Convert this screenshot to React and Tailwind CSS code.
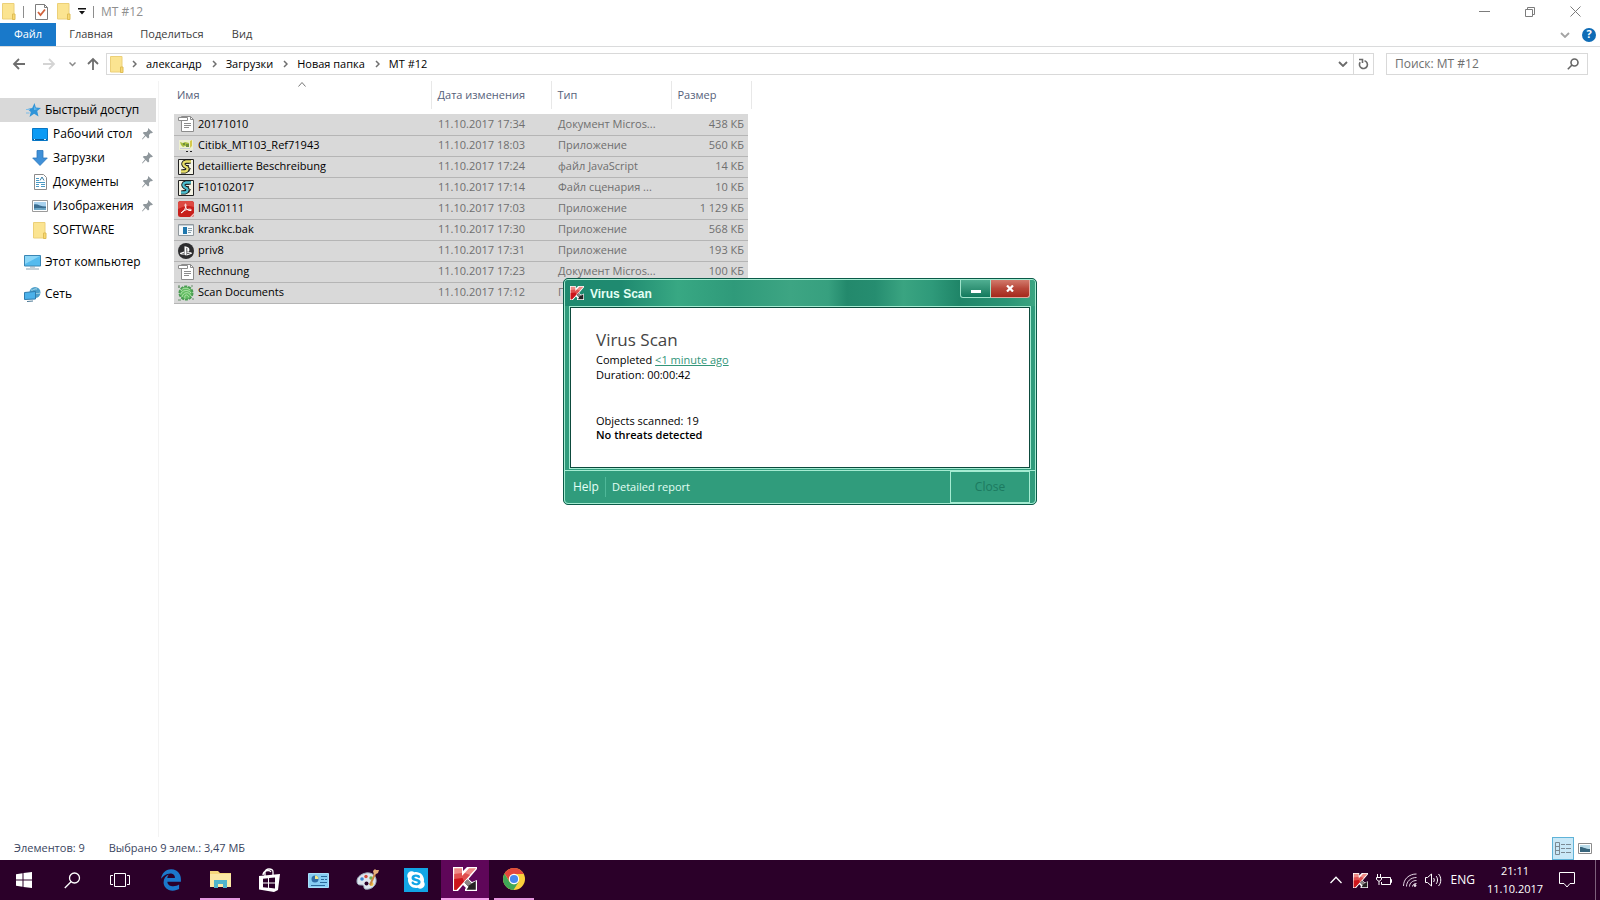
import React from 'react';
import { FaEdgeLegacy, FaPlaystation, FaSkype } from 'react-icons/fa';

/* ---------- Icons ---------- */

const FolderIcon = () => (
  <svg width="14" height="17" viewBox="0 0 14 17">
    <path d="M.5.5h11.500v15.500H.5z" fill="#fbe491" stroke="#ecd078" />
    <path d="M10.500 11h2.500v5.500h-2.500z" fill="#f8d873" stroke="#dfbd55" />
  </svg>
);

const CheckDocIcon = () => (
  <svg width="13" height="16" viewBox="0 0 13 16">
    <path d="M.5.5h9l3 3v12H.5z" fill="#fff" stroke="#7d7d7d" />
    <path d="M9.500.5v3h3" fill="none" stroke="#7d7d7d" />
    <path d="M3 8l2.500 3L10 5.500" fill="none" stroke="#d0623c" strokeWidth="1.800" />
  </svg>
);

const Arrow = ({ className, d }) => (
  <svg width="14" height="14" viewBox="0 0 14 14" className={className} fill="none" stroke="currentColor" strokeWidth="1.800">
    <path d={d} />
  </svg>
);

const Chevron = () => (
  <svg width="5" height="8" viewBox="0 0 5 8" fill="none" stroke="#6f6f6f" strokeWidth="1.500">
    <path d="M1 1l3 3-3 3" />
  </svg>
);

const DownChevron = ({ className }) => (
  <svg width="10" height="6" viewBox="0 0 10 6" className={className} fill="none" stroke="currentColor" strokeWidth="1.800">
    <path d="M1 1l4 4 4-4" />
  </svg>
);

const StarIcon = () => (
  <svg width="15" height="14" viewBox="0 0 15 14">
    <path d="M8.500 0l1.300 4.400L15 5l-3.800 3 1.300 5.400-4.400-2.600L3.500 14l1.300-5L1.500 6l4.700-.9z" fill="#3094d8" />
    <path d="M0 6.500h4M0 10h3.500" stroke="#7dbde8" />
    <path d="M8.500 3l.8 2.600 2.500.4L8 7z" fill="#6fc0f0" />
  </svg>
);

const DesktopIcon = () => (
  <svg width="16" height="13" viewBox="0 0 16 13">
    <path d="M.5.5h15v12H.5z" fill="#0c9bf5" stroke="#0876c4" />
    <path d="M1 11.500h14" stroke="#065a9c" />
    <path d="M2 11.500h1M12 11.500h2" stroke="#d8f0ff" />
  </svg>
);

const DownloadIcon = () => (
  <svg width="16" height="16" viewBox="0 0 16 16">
    <path d="M5 .5h6V8h4.300L8 15.500.7 8H5z" fill="#3f90d8" stroke="#2c77bd" strokeWidth=".8" />
  </svg>
);

const DocumentIcon = () => (
  <svg width="13" height="16" viewBox="0 0 13 16">
    <path d="M.5.5h9l3 3v12H.5z" fill="#fff" stroke="#8b8b8b" />
    <path d="M2 4.500h3M2 6.500h3M2 8.500h9M2 10.500h3M2 12.500h3M7 10.500h4M7 12.500h4" stroke="#4a9ac4" />
    <path d="M6 6.500L8 3l2 3.500" fill="none" stroke="#397fa8" />
  </svg>
);

const PictureIcon = () => (
  <svg width="16" height="12" viewBox="0 0 16 12">
    <path d="M.5.5h15v11H.5z" fill="#fff" stroke="#9b9b9b" />
    <path d="M2 2h12v8H2z" fill="#a9d2ee" />
    <path d="M2 4.500c3-1.500 6 2 12 2V10H2z" fill="#3c6f92" />
    <path d="M2 8.500c4-1 8 0 12-.5v2H2z" fill="#6fa8c7" />
  </svg>
);

const ComputerIcon = () => (
  <svg width="17" height="15" viewBox="0 0 17 15">
    <path d="M.5.5h16v10.500H.5z" fill="#55bbee" stroke="#3a86b4" />
    <path d="M1 1h15L1 9z" fill="#8bd6f7" />
    <path d="M2 14h13M6 12h5" stroke="#8aa2b0" />
  </svg>
);

const NetworkIcon = () => (
  <svg width="17" height="15" viewBox="0 0 17 15">
    <circle cx="11" cy="5.500" r="5.500" fill="#4d9fca" />
    <path d="M7 3c2 1 3-2 6-1M11 7c2-1 3 0 5-1" stroke="#a9daea" fill="none" />
    <path d="M.5 5.500l11-1V12l-11 .5z" fill="#4bb1ea" stroke="#2f7cae" />
    <path d="M3 14.500l6-.5" stroke="#4c7894" />
  </svg>
);

const PinIcon = () => (
  <svg width="11" height="12" viewBox="0 0 11 12">
    <path d="M6 0l5 4.500-1.500.7-1 .1-1.500 1.800.2 2.400-1.200 1L3.700 8 .5 11.500 0 11l3-3.800L.8 5l1-1 2.600.1L6 2.300z" fill="#8f979c" />
  </svg>
);

const RichTextIcon = () => (
  <svg width="16" height="16" viewBox="0 0 16 16">
    <path d="M3.500.5h9l3 3v12h-12z" fill="#fff" stroke="#8c8c8c" />
    <path d="M12.500.5v3h3" fill="none" stroke="#8c8c8c" />
    <path d="M.5 1.500h9v3h-9z" fill="#fff" stroke="#8c8c8c" />
    <path d="M6 7.500h7M6 9.500h7M6 11.500h5" stroke="#8c8c8c" />
  </svg>
);

const CardIcon = () => (
  <svg width="16" height="14" viewBox="0 0 16 14">
    <path d="M1 1h14v10H1z" fill="#eef0d0" />
    <path d="M2 3l3 1 2-1 4 1v4L7 7 5 8 3 6z" fill="#a9bf3f" />
    <path d="M5 4h2v2H5zM8 5h3v3H8z" fill="#6f8f3c" />
    <path d="M12 2l2-1v6l-2 2z" fill="#d6c94a" />
    <path d="M8 12.500h2M12 12.500h2" stroke="#222" />
    <path d="M2 9.500h10" stroke="#c8cdd8" />
  </svg>
);

const ScriptIcon = ({ color }) => (
  <svg width="16" height="16" viewBox="0 0 16 16">
    <path d="M.5.500h15v15H.5z" fill="#f4f3e4" stroke="#222" />
    <path d="M13 2.500H8C5 3 4.500 5.500 6.500 7L9 8.500c1.500 1.500 0 3.500-2 4H3" fill="none" stroke="#111" strokeWidth="4" />
    <path d="M13 2.500H8C5 3 4.500 5.500 6.500 7L9 8.500c1.500 1.500 0 3.500-2 4H3" fill="none" stroke={color} strokeWidth="2.400" />
    <path d="M7.500 4.500h4M8 6.500h3M4.500 10.500h3M10.500 13l2-4" stroke="#111" strokeWidth=".8" />
  </svg>
);

const PdfIcon = () => (
  <svg width="16" height="16" viewBox="0 0 16 16">
    <rect width="16" height="16" rx="2.500" fill="#c8201c" />
    <path d="M0 3Q0 0 3 0h10q3 0 3 3v3Q8 3 0 8z" fill="#dd4a42" />
    <path d="M3 12c3-1 5-5 5-8 0-1.500-1.500-1-1 .5C8 8 10 10 13 9.500c1-.5 0-1.500-2-1.300C8 8.500 5 9.500 3 12z" fill="none" stroke="#fff" />
    <path d="M16 12v2l-2 2h-2z" fill="#f4c3bf" />
  </svg>
);

const AppIcon = () => (
  <svg width="16" height="12" viewBox="0 0 16 12">
    <path d="M.5.500h15v11H.5z" fill="#f5f9fb" stroke="#8f979c" />
    <path d="M1 1.500h14" stroke="#c3cdd4" />
    <path d="M5 3h4v7H5z" fill="#1f77ad" />
    <path d="M10 4.500h4M10 6.500h4M10 8.500h3" stroke="#8ba0ac" />
  </svg>
);

const PlaystationIcon = () => (
  <span className="flex size-4 items-center justify-center rounded-full bg-[#2d2d2f]">
    <FaPlaystation className="size-3 text-white" />
  </span>
);

const ScanIcon = () => (
  <svg width="16" height="16" viewBox="0 0 16 16">
    <circle cx="8" cy="8" r="6.500" fill="#62bd62" stroke="#4a9c52" strokeDasharray="3 1" strokeWidth="2" />
    <path d="M3 6c1-3 6-4 9-1M2.500 9.500C4 5 10 4 13 8M4 12c1-5 7-6 9-1M7 13.500c-1-4 2-5 4-1" fill="none" stroke="#c4ebbd" strokeWidth=".8" />
    <path d="M0 2h2M1 0v3M14 14h2M0 15h3M13 1h2" stroke="#6c8f6e" />
  </svg>
);

const KasperskyIcon = ({ className }) => (
  <svg viewBox="0 0 24 24" className={className}>
    <path d="M0 0h10v4l4-4h10v2l-8.500 10 3.500 3 5-2v11H12v-2l1-1-3-3-5 6H0z" fill="#fff" />
    <path d="M1.200 1.200H9V9l7-7.800h7L10.500 15 3.500 22.800H1.200z" fill="#ee8a86" />
    <path d="M1.200 7L9 6v3l3-3 5 2-6.500 7-7 7.800H1.200z" fill="#e04f4f" />
    <path d="M1.200 12l8.300-1 1.500 3.500-7.500 8.300H1.200z" fill="#cc141b" />
    <path d="M11.500 15.500l3-3 4 4 4.300-2.500v8.800h-9.300l2-3z" fill="#262222" />
    <path d="M11.500 15.500l3-3 4 4 2-1-5.500 3.500z" fill="#8a8585" />
  </svg>
);

/* ---------- Data ---------- */

const QUICK_LINKS = [
  { label: 'Рабочий стол', icon: <DesktopIcon />, pinned: true },
  { label: 'Загрузки', icon: <DownloadIcon />, pinned: true },
  { label: 'Документы', icon: <DocumentIcon />, pinned: true },
  { label: 'Изображения', icon: <PictureIcon />, pinned: true },
  { label: 'SOFTWARE', icon: <FolderIcon />, pinned: false },
];

const FILES = [
  { name: '20171010', date: '11.10.2017 17:34', type: 'Документ Micros...', size: '438 КБ', icon: <RichTextIcon /> },
  { name: 'Citibk_MT103_Ref71943', date: '11.10.2017 18:03', type: 'Приложение', size: '560 КБ', icon: <CardIcon /> },
  { name: 'detaillierte Beschreibung', date: '11.10.2017 17:24', type: 'файл JavaScript', size: '14 КБ', icon: <ScriptIcon color="#e8df6a" /> },
  { name: 'F10102017', date: '11.10.2017 17:14', type: 'Файл сценария ...', size: '10 КБ', icon: <ScriptIcon color="#4fc0d0" /> },
  { name: 'IMG0111', date: '11.10.2017 17:03', type: 'Приложение', size: '1 129 КБ', icon: <PdfIcon /> },
  { name: 'krankc.bak', date: '11.10.2017 17:30', type: 'Приложение', size: '568 КБ', icon: <AppIcon /> },
  { name: 'priv8', date: '11.10.2017 17:31', type: 'Приложение', size: '193 КБ', icon: <PlaystationIcon /> },
  { name: 'Rechnung', date: '11.10.2017 17:23', type: 'Документ Micros...', size: '100 КБ', icon: <RichTextIcon /> },
  { name: 'Scan Documents', date: '11.10.2017 17:12', type: 'Приложение', size: '', icon: <ScanIcon /> },
];

const PATH = ['александр', 'Загрузки', 'Новая папка', 'MT #12'];

/* ---------- Explorer ---------- */

const TitleBar = () => (
  <header className="flex h-[23px] items-center pl-[2px]">
    <FolderIcon />
    <span className="ml-[7px] h-3 w-px bg-[#8d8d8d]" />
    <button aria-label="Свойства" className="ml-[11px]"><CheckDocIcon /></button>
    <button aria-label="Новая папка" className="ml-[9px]"><FolderIcon /></button>
    <button aria-label="Настройка панели" className="ml-[7px]">
      <svg width="8" height="7" viewBox="0 0 8 7"><path d="M0 0h8v1.500H0zM1 3h6L4 6.500z" fill="#111" /></svg>
    </button>
    <span className="ml-[7px] h-3 w-px bg-[#8d8d8d]" />
    <h1 className="ml-[7px] text-xs text-[#8f8f8f]">MT #12</h1>
    <div className="ml-auto flex h-full items-center pr-[2px] text-[#7c7c7c]">
      <button aria-label="Свернуть" className="flex w-[45px] justify-center">
        <svg width="11" height="11" viewBox="0 0 11 11" stroke="currentColor"><path d="M0 5.500h11" /></svg>
      </button>
      <button aria-label="Развернуть" className="flex w-[45px] justify-center">
        <svg width="10" height="10" viewBox="0 0 10 10" fill="none" stroke="currentColor"><path d="M.5 2.500h7v7h-7zM2.500 2.500v-2h7v7h-2" /></svg>
      </button>
      <button aria-label="Закрыть" className="flex w-[46px] justify-center">
        <svg width="11" height="11" viewBox="0 0 11 11" stroke="currentColor"><path d="M.5.500l10 10M10.500.500l-10 10" /></svg>
      </button>
    </div>
  </header>
);

const Ribbon = () => (
  <nav className="flex h-6 items-stretch border-b border-[#dadbdc] text-[#3d3d3d]">
    <button className="w-14 bg-[#1979ca] text-white">Файл</button>
    <button className="w-[70px]">Главная</button>
    <button className="w-[92px]">Поделиться</button>
    <button className="w-12">Вид</button>
    <div className="ml-auto flex items-center gap-3 pr-1">
      <DownChevron className="text-[#a3a3a3]" />
      <button aria-label="Справка" className="flex size-[14px] items-center justify-center rounded-full bg-[#0f6cb6] font-bold text-white">?</button>
    </div>
  </nav>
);

const AddressBar = () => (
  <div className="flex h-[34px] items-center pr-3">
    <button aria-label="Назад" className="ml-3 text-[#6e6e6e]"><Arrow d="M13 7H2M7 2L2 7l5 5" /></button>
    <button aria-label="Вперёд" className="ml-4 text-[#d4d4d4]"><Arrow d="M1 7h11M7 2l5 5-5 5" /></button>
    <button aria-label="Последние расположения" className="ml-[13px] text-[#8a8a8a]">
      <svg width="7" height="5" viewBox="0 0 7 5" fill="none" stroke="currentColor" strokeWidth="1.500"><path d="M.5.500l3 3 3-3" /></svg>
    </button>
    <button aria-label="Вверх" className="ml-[10px] text-[#6e6e6e]"><Arrow d="M7 13V2M2 7l5-5 5 5" /></button>
    <div className="ml-[6px] flex h-[22px] flex-1 items-center border border-[#d9d9d9] pl-[3px]">
      <FolderIcon />
      <ol className="ml-2 flex items-center">
        {PATH.map((part) => (
          <li key={part} className="flex items-center">
            <Chevron />
            <a href="#" className="mr-[10px] ml-[9px] text-black">{part}</a>
          </li>
        ))}
      </ol>
      <button aria-label="Предыдущие расположения" className="ml-auto flex w-5 justify-center text-[#6a6a6a]"><DownChevron /></button>
      <button aria-label="Обновить" className="flex h-full w-5 items-center justify-center border-l border-[#d9d9d9] text-[#6a6a6a]">
        <svg width="11" height="12" viewBox="0 0 11 12" fill="none" stroke="currentColor" strokeWidth="1.600">
          <path d="M6.500 2.700A4 4 0 1 1 2.200 4.200M1 1.500h3.500V5" />
        </svg>
      </button>
    </div>
    <label className="ml-3 flex h-[22px] w-[202px] items-center border border-[#d9d9d9] pr-2 pl-2">
      <input type="text" aria-label="Поиск" placeholder="Поиск: MT #12" className="min-w-0 flex-1 text-xs outline-none placeholder:text-[#6f6f6f]" />
      <svg width="12" height="12" viewBox="0 0 12 12" fill="none" stroke="#666" strokeWidth="1.600">
        <circle cx="7.500" cy="4.500" r="3.500" />
        <path d="M5 7L.8 11.200" />
      </svg>
    </label>
  </div>
);

const Sidebar = () => (
  <aside className="w-[159px] shrink-0 border-r border-[#f3f3f3] pt-[17px] text-xs text-black">
    <a href="#" className="mr-[2px] flex h-6 items-center bg-[#d9d9d9] pl-[26px]">
      <span className="w-[19px]"><StarIcon /></span>
      Быстрый доступ
    </a>
    <ul>
      {QUICK_LINKS.map((link) => (
        <li key={link.label} className="flex h-6 items-center pr-[5px] pl-8">
          <span className="flex w-4 justify-center">{link.icon}</span>
          <a href="#" className="ml-[5px] flex-1 whitespace-nowrap">{link.label}</a>
          {link.pinned && <PinIcon />}
        </li>
      ))}
    </ul>
    <a href="#" className="mt-2 flex h-6 items-center pl-6">
      <span className="w-[21px]"><ComputerIcon /></span>
      Этот компьютер
    </a>
    <a href="#" className="mt-2 flex h-6 items-center pl-6">
      <span className="w-[21px]"><NetworkIcon /></span>
      Сеть
    </a>
  </aside>
);

const FileTable = () => (
  <main className="flex-1 pl-[15px]">
    <table className="w-[577px] table-fixed border-collapse">
      <colgroup>
        <col className="w-[257px]" />
        <col className="w-[120px]" />
        <col className="w-[120px]" />
        <col className="w-[77px]" />
        <col className="w-[3px]" />
      </colgroup>
      <thead>
        <tr className="h-[28px] text-left text-[#56617a]">
          <th className="relative border-r border-[#e8e8e8] p-0 pl-[3px] font-normal">
            Имя
            <svg width="8" height="5" viewBox="0 0 8 5" className="absolute top-px left-[124px]" fill="none" stroke="#777"><path d="M.5 4.500l3.500-4 3.500 4" /></svg>
          </th>
          <th className="border-r border-[#e8e8e8] p-0 pl-[6px] font-normal">Дата изменения</th>
          <th className="border-r border-[#e8e8e8] p-0 pl-[6px] font-normal">Тип</th>
          <th className="p-0 pl-[6px] font-normal">Размер</th>
          <td className="border-r border-[#e8e8e8] p-0" />
        </tr>
        <tr className="h-[5px]"><td className="p-0" /></tr>
      </thead>
      <tbody>
        {FILES.map((file) => (
          <tr key={file.name} className="h-[21px] text-[#6f6f6f]">
            <td className="border-b border-[#b5b5b5] bg-[#d9d9d9] p-0 pl-1 text-black">
              <div className="flex h-5 items-center gap-1">
                <span className="flex w-4 justify-center">{file.icon}</span>
                {file.name}
              </div>
            </td>
            <td className="border-b border-[#b5b5b5] bg-[#d9d9d9] p-0 pl-[7px] whitespace-nowrap">{file.date}</td>
            <td className="border-b border-[#b5b5b5] bg-[#d9d9d9] p-0 pl-[7px] whitespace-nowrap">{file.type}</td>
            <td className="border-b border-[#b5b5b5] bg-[#d9d9d9] p-0 pr-1 text-right whitespace-nowrap">{file.size}</td>
          </tr>
        ))}
      </tbody>
    </table>
  </main>
);

const StatusBar = () => (
  <footer className="flex h-[23px] items-center pl-[14px] pr-2 text-[#3a4560]">
    <span>Элементов: 9</span>
    <span className="ml-6">Выбрано 9 элем.: 3,47 МБ</span>
    <button aria-label="Таблица" className="ml-auto flex h-full w-[22px] items-center justify-center border border-[#5fb3d8] bg-[#c9e8f7]">
      <svg width="16" height="13" viewBox="0 0 16 13" fill="none" stroke="#7b8a94">
        <path d="M.5.500h4v12h-4zM.5 4.500h4M.5 8.500h4M6 2.500h4M11 2.500h5M6 6.500h4M11 6.500h5M6 10.500h4M11 10.500h5" />
      </svg>
    </button>
    <button aria-label="Эскизы" className="ml-1">
      <svg width="14" height="11" viewBox="0 0 14 11">
        <path d="M.5.500h13v10H.5z" fill="#fff" stroke="#8c8c8c" />
        <path d="M2 2h10v7H2z" fill="#b9dbe9" />
        <path d="M2 4c4 0 5 2 10 2v3H2z" fill="#38657c" />
      </svg>
    </button>
  </footer>
);

/* ---------- Virus scan dialog ---------- */

const ScanDialog = () => (
  <section
    role="dialog"
    aria-label="Virus Scan"
    className="absolute top-[278px] left-[563px] flex w-[474px] flex-col rounded-[5px] border border-[#0b5a48] bg-[#309c7c]"
  >
    <div className="rounded-[4px] border border-[#a5ecd2]">
      <div className="flex h-[26px] items-start rounded-t-[3px] bg-[linear-gradient(90deg,#1f8a6f_0%,#1f8a70_12%,#38a883_24%,#2f9a7a_36%,#3da583_48%,#37a07f_56%,#23896c_60%,#268d70_66%,#3aa481_72%,#2f9a7a_78%,#1f8568_84%,#2a9475_94%,#3ba581_100%)] pl-[5px]">
        <KasperskyIcon className="mt-[6px] size-[14px]" />
        <h2 className="mt-1 ml-[6px] font-['Liberation_Sans',sans-serif] text-xs leading-5 font-bold text-[#e4fff5]">Virus Scan</h2>
        <button aria-label="Minimize" className="ml-auto flex h-[18px] w-[31px] justify-center rounded-bl-[3px] border border-t-0 border-[#9fe3ca] bg-linear-to-b from-[#4fae91] to-[#0e7a5d] pt-[10px]">
          <span className="h-[3px] w-[10px] bg-white" />
        </button>
        <button aria-label="Close window" className="mr-[5px] flex h-[18px] w-[39px] items-center justify-center rounded-br-[3px] border border-t-0 border-l-0 border-[#e0aaa0] bg-linear-to-b from-[#d27a6c] via-[#b8473a] to-[#a5281b]">
          <svg width="8" height="7" viewBox="0 0 8 7" stroke="#fff" strokeWidth="2.200"><path d="M1 .500l6 6M7 .500l-6 6" /></svg>
        </button>
      </div>
      <div className="mx-[4px] mb-px border border-[#a5ecd2]">
        <div className="h-[161px] border border-[#0d4a3d] bg-white pt-[22px] pl-[25px] text-black">
          <h3 className="text-[17px] leading-5 text-[#444]">Virus Scan</h3>
          <p className="mt-[2px] leading-[15px]">
            Completed <a href="#" className="text-[#33967a] underline">&lt;1 minute ago</a>
          </p>
          <p className="leading-[15px]">Duration: 00:00:42</p>
          <p className="mt-8 leading-[14px]">Objects scanned: 19</p>
          <p className="leading-[14px] font-semibold">No threats detected</p>
        </div>
      </div>
      <div className="flex h-[33px] items-center border-t border-[#a5ecd2] pr-[5px] pl-2 text-[#e4fff5]">
        <button className="text-xs">Help</button>
        <span className="mx-[6px] h-5 w-px bg-[#4fb899]" />
        <button>Detailed report</button>
        <button className="ml-auto h-8 w-20 border border-[#a5ecd2] text-xs text-[#1c7a60]">Close</button>
      </div>
    </div>
  </section>
);

/* ---------- Taskbar ---------- */

const TaskButton = ({ label, active, running, children }) => (
  <button
    aria-label={label}
    className={`flex h-full w-12 flex-col items-center ${active ? 'bg-[#5f0659]' : ''}`}
  >
    <span className="flex flex-1 items-center justify-center">{children}</span>
    {active && <span className="h-[2px] w-12 bg-[#f3a0ea]" />}
    {running && <span className="h-[2px] w-10 bg-[#e596de]" />}
  </button>
);

const Taskbar = () => (
  <footer className="flex h-10 items-stretch bg-[#2b0029] text-white">
    <div className="mr-[3px] flex">
      <TaskButton label="Пуск">
        <svg width="16" height="16" viewBox="0 0 16 16" fill="#fff"><path d="M0 2.200l6.500-.9v6.200H0zM7.500 1.100L16 0v7.500H7.500zM0 8.500h6.500v6.200L0 13.800zM7.500 8.500H16V16l-8.500-1.100z" /></svg>
      </TaskButton>
      <TaskButton label="Поиск в Windows">
        <svg width="17" height="17" viewBox="0 0 17 17" fill="none" stroke="#fff" strokeWidth="1.300"><circle cx="10.500" cy="6" r="5" /><path d="M7 9.700L.8 16" /></svg>
      </TaskButton>
      <TaskButton label="Представление задач">
        <svg width="20" height="14" viewBox="0 0 20 14" fill="none" stroke="#fff"><path d="M4.500.500h11v13h-11zM3 2.500H.5v9H3M17 2.500h2.500v9H17" /></svg>
      </TaskButton>
    </div>
    <div className="flex gap-px">
      <TaskButton label="Edge"><FaEdgeLegacy className="size-[22px] text-[#1b78cc]" /></TaskButton>
      <TaskButton label="Проводник" running>
        <svg width="21" height="18" viewBox="0 0 21 18">
          <path d="M0 1h8l2 2h11v14H0z" fill="#f5d77c" />
          <path d="M0 4h21v13H0z" fill="#fbe8a5" />
          <path d="M4 18v-8h13v8h-4v-4H8v4z" fill="#4fb3cc" />
        </svg>
      </TaskButton>
      <TaskButton label="Магазин">
        <svg width="21" height="24" viewBox="0 0 21 24">
          <path d="M6 8V4c0-4 8-4 8 0v3M4 7c0-4 6-6 8-3" fill="none" stroke="#fff" strokeWidth="1.300" />
          <path d="M0 8l21-2-2 16-4 2L0 21.500z" fill="#fff" />
          <path d="M4 10.700l5-.5v4.300H4zM10 10.100l6-.6v5h-6zM4 15.500h5v4.200l-5-.5zM10 15.500h6v5l-6-.7z" fill="#2b0029" />
        </svg>
      </TaskButton>
      <TaskButton label="Панель управления">
        <svg width="21" height="15" viewBox="0 0 21 15">
          <path d="M.5.500h20v14H.5z" fill="#86cdf3" stroke="#a9e0fa" />
          <circle cx="7" cy="6" r="3.500" fill="#2f6fa8" />
          <path d="M7 6V2.500A3.500 3.500 0 0 1 10.500 6z" fill="#f2e88a" />
          <path d="M13 3.500h6M13 6.500h3M17 6.500h2M12 9.500h7M3 12.500h14" stroke="#2b6a9a" />
        </svg>
      </TaskButton>
      <TaskButton label="Paint">
        <svg width="23" height="22" viewBox="0 0 23 22">
          <path d="M10 4c6-1 11 3 10 9-1 5-6 8-11 7-2-1 0-4-3-4s-5 0-5-4 4-7 9-8z" fill="#dfe6ee" stroke="#9fb0c0" />
          <circle cx="6" cy="10" r="1.800" fill="#3b84d0" />
          <circle cx="10" cy="7.500" r="1.700" fill="#d34c3d" />
          <circle cx="15" cy="9" r="1.700" fill="#6bb14a" />
          <circle cx="10.500" cy="14.500" r="2" fill="#2b0029" />
          <circle cx="15.500" cy="15" r="2" fill="#f0c244" />
          <path d="M14 16l5-11" stroke="#c98743" strokeWidth="2" />
          <path d="M18 6l-1-4 2-2 1 1h3l-1 3z" fill="#e6b07a" />
        </svg>
      </TaskButton>
      <TaskButton label="Skype">
        <span className="flex size-6 items-center justify-center bg-[#12a5e6]"><FaSkype className="size-5 text-white" /></span>
      </TaskButton>
      <TaskButton label="Kaspersky" active><KasperskyIcon className="size-6" /></TaskButton>
      <TaskButton label="Chrome" running>
        <svg width="22" height="22" viewBox="0 0 22 22">
          <circle cx="11" cy="11" r="11" fill="#fbcf3b" />
          <path d="M1.500 5.500A11 11 0 0 1 20.500 5.500L20.800 6H11l-4.500 7.500z" fill="#e2483c" />
          <path d="M1.500 5.500l5 8.500 4.500 2.500 4.500-2.500-5 8A11 11 0 0 1 1.500 5.500z" fill="#3fa757" />
          <circle cx="11" cy="11" r="5.200" fill="#fff" />
          <circle cx="11" cy="11" r="4.100" fill="#4689ef" />
        </svg>
      </TaskButton>
    </div>

    {/* System tray */}
    <div className="ml-auto flex items-center">
      <button aria-label="Скрытые значки" className="mr-[11px]">
        <svg width="12" height="8" viewBox="0 0 12 8" fill="none" stroke="#fff" strokeWidth="1.300"><path d="M.5 7L6 1.300 11.500 7" /></svg>
      </button>
      <KasperskyIcon className="mr-2 size-[15px]" />
      <svg width="16" height="13" viewBox="0 0 16 13" className="mr-[11px]" fill="none" stroke="#fff">
        <path d="M6 3.500h8.500v7H5.500V8M14.500 5.500h1v3h-1M1.500 0v3M4.500 0v3M.5 3.500h5v2l-2 1.500h-1l-2-1.500zM3 7v4" />
      </svg>
      <svg width="14" height="14" viewBox="0 0 14 14" className="mr-2" fill="none" stroke="#e6d8e6">
        <path d="M.5 13C.5 6 6 1 13.500 1M3.500 13.500c0-5 4-9 10-9M6.500 13.500c0-3.500 3-6 7-6M9.500 13.500c0-2 2-3 4-3" />
        <circle cx="12" cy="12.500" r="1" fill="#fff" />
      </svg>
      <svg width="17" height="14" viewBox="0 0 17 14" className="mr-[9px]" fill="none" stroke="#fff">
        <path d="M.5 4.500h2L6.500 1v12l-4-3.500h-2zM8.500 5c1 1 1 3 0 4M11 3c2 2 2 6 0 8M13.500 1c3 3 3 9 0 12" />
      </svg>
      <span className="text-xs">ENG</span>
      <time className="mr-4 ml-3 w-14 text-center leading-[18px]">
        21:11<br />11.10.2017
      </time>
      <button aria-label="Центр уведомлений" className="mr-5">
        <svg width="16" height="16" viewBox="0 0 16 16" fill="none" stroke="#fff"><path d="M.5.500h15v11H11l-3 3.500-3-3.500H.5z" /></svg>
      </button>
      <span className="mr-1 h-full w-px bg-[#7d5f7b]" />
    </div>
  </footer>
);

const App = () => (
  <div className="relative flex min-h-screen flex-col bg-white font-['Open_Sans','Noto_Sans',sans-serif] text-[11px]">
    <TitleBar />
    <Ribbon />
    <AddressBar />
    <div className="flex flex-1">
      <Sidebar />
      <FileTable />
    </div>
    <StatusBar />
    <Taskbar />
    <ScanDialog />
  </div>
);

export default App;
